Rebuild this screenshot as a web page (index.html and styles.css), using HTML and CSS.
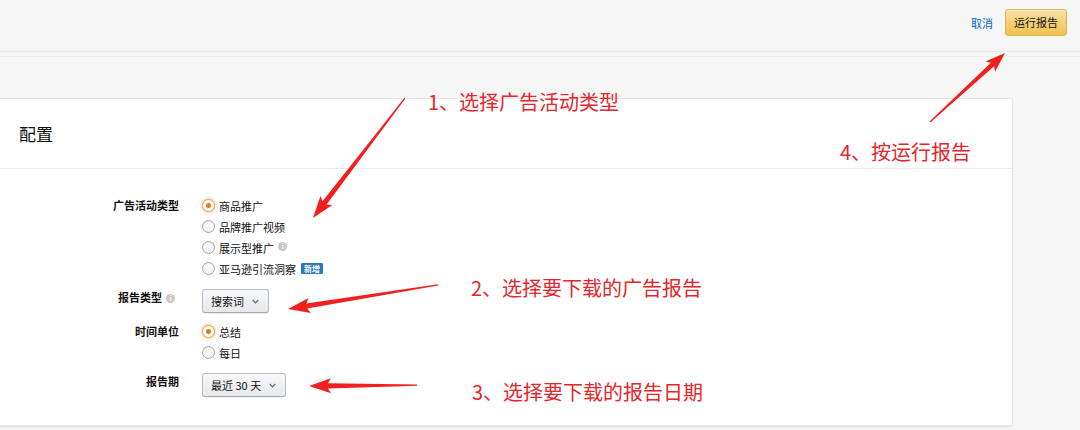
FILE: index.html
```html
<!DOCTYPE html>
<html lang="zh-CN">
<head>
    <meta charset="UTF-8">
    <meta name="viewport" content="width=device-width, initial-scale=1.0">
    <title>配置报告</title>
    <link rel="stylesheet" href="styles.css">
</head>
<body>
    <div class="page">
        <header class="topbar">
            <a class="cancel-link" href="#">取消</a>
            <button class="run-btn">运行报告</button>
        </header>
        <div class="subbar"></div>

        <main class="main">
            <section class="card">
                <div class="card-header">配置</div>
                <div class="card-body">
                    <div class="form-row">
                        <div class="form-label">广告活动类型</div>
                        <div class="form-field">
                            <label class="radio"><span class="radio-dot checked"></span>商品推广</label>
                            <label class="radio"><span class="radio-dot"></span>品牌推广视频</label>
                            <label class="radio"><span class="radio-dot"></span>展示型推广<span class="info-icon">i</span></label>
                            <label class="radio"><span class="radio-dot"></span>亚马逊引流洞察<span class="badge">新增</span></label>
                        </div>
                    </div>

                    <div class="form-row select-row">
                        <div class="form-label">报告类型<span class="info-icon">i</span></div>
                        <div class="form-field">
                            <div class="dropdown">搜索词
                                <svg class="chevron" width="7" height="5" viewBox="0 0 7 5"><polyline points="0.8,1 3.5,3.8 6.2,1" fill="none" stroke="#666" stroke-width="1.2"/></svg>
                            </div>
                        </div>
                    </div>

                    <div class="form-row time-row">
                        <div class="form-label">时间单位</div>
                        <div class="form-field">
                            <label class="radio"><span class="radio-dot checked"></span>总结</label>
                            <label class="radio"><span class="radio-dot"></span>每日</label>
                        </div>
                    </div>

                    <div class="form-row select-row">
                        <div class="form-label">报告期</div>
                        <div class="form-field">
                            <div class="dropdown">最近 30 天
                                <svg class="chevron" width="7" height="5" viewBox="0 0 7 5"><polyline points="0.8,1 3.5,3.8 6.2,1" fill="none" stroke="#666" stroke-width="1.2"/></svg>
                            </div>
                        </div>
                    </div>
                </div>
            </section>
        </main>

        <!-- annotations drawn on top of the screenshot -->
        <div class="notes">
            <svg class="arrows" width="1080" height="430" viewBox="0 0 1080 430">
                <g fill="#f0201e">
                    <polygon transform="translate(313,218) rotate(127.5)" points="-151,-0.6 -19,-2.6 -22,-7.5 0,0 -22,7.5 -19,2.6 -151,0.6"/>
                    <polygon transform="translate(288,309) rotate(170.9)" points="-152,-0.6 -19,-2.6 -22,-7.5 0,0 -22,7.5 -19,2.6 -152,0.6"/>
                    <polygon transform="translate(309,386) rotate(179.5)" points="-108,-0.6 -19,-2.6 -22,-7.5 0,0 -22,7.5 -19,2.6 -108,0.6"/>
                    <polygon transform="translate(1005,53) rotate(-42.6)" points="-102,-0.6 -17,-2.4 -20,-7 0,0 -20,7 -17,2.4 -102,0.6"/>
                </g>
            </svg>
            <div class="note note-1">1、选择广告活动类型</div>
            <div class="note note-2">2、选择要下载的广告报告</div>
            <div class="note note-3">3、选择要下载的报告日期</div>
            <div class="note note-4">4、按运行报告</div>
        </div>
    </div>
</body>
</html>
```

FILE: styles.css
```css
body {
    margin: 0;
    background-color: #f6f6f6;
    color: #111;
    font-family: "Noto Sans CJK SC", "Liberation Sans", sans-serif;
    font-size: 11px;
}
.page {
    position: relative;
    width: 1080px;
    height: 430px;
    overflow: hidden;
}
.topbar {
    height: 52px;
    display: flex;
    justify-content: flex-end;
    align-items: center;
    gap: 12px;
    padding-right: 13px;
    border-bottom: 1px solid #e9e9e9;
    box-sizing: border-box;
}
.cancel-link {
    color: #0066c0;
    text-decoration: none;
    font-size: 11px;
    margin-top: -5px;
}
.run-btn {
    width: 62px;
    height: 27px;
    padding: 0;
    margin-top: -7px;
    font-family: inherit;
    font-size: 11px;
    color: #111;
    background: linear-gradient(to bottom, #f7dfa5, #f0c14b);
    border: 1px solid #d9b458;
    border-radius: 3px;
    box-shadow: 0 1px 0 rgba(255, 255, 255, 0.4) inset;
}
.subbar {
    height: 4px;
    border-bottom: 1px solid #ececec;
}
.main {
    padding-top: 41px;
}
.card {
    margin-left: -10px;
    width: 1023px;
    height: 328px;
    background-color: #fff;
    border: 1px solid #e6e6e6;
    border-radius: 3px;
    box-shadow: 0 1px 2px rgba(0, 0, 0, 0.08);
    box-sizing: border-box;
}
.card-header {
    height: 70px;
    padding-left: 28px;
    display: flex;
    align-items: center;
    font-size: 17px;
    color: #111;
    border-bottom: 1px solid #eaeaea;
    box-sizing: border-box;
}
.card-body {
    padding-top: 26px;
}
.form-row {
    display: grid;
    grid-template-columns: 188px 1fr;
    column-gap: 23px;
    margin-bottom: 10px;
}
.time-row {
    margin-top: -2px;
}
.form-label {
    text-align: right;
    font-weight: bold;
    line-height: 21px;
    color: #111;
}
.select-row .form-label {
    margin-top: -2px;
}
.form-field {
    display: flex;
    flex-direction: column;
    align-items: flex-start;
}
.radio {
    display: flex;
    align-items: center;
    height: 21px;
    color: #111;
}
.radio-dot {
    width: 13px;
    height: 13px;
    margin-right: 4px;
    border: 1px solid #a6a6a6;
    border-radius: 50%;
    background: linear-gradient(to bottom, #fdfdfd, #f1f1f1);
    box-shadow: 0 1px 0 rgba(0, 0, 0, 0.05) inset;
    box-sizing: border-box;
    position: relative;
}
.radio-dot.checked {
    border-color: #e0a060;
    background: #fff;
    box-shadow: 0 0 3px 1px rgba(228, 121, 17, 0.35);
}
.radio-dot.checked::after {
    content: "";
    position: absolute;
    left: 3px;
    top: 3px;
    width: 5px;
    height: 5px;
    border-radius: 50%;
    background-color: #e47911;
}
.info-icon {
    display: inline-flex;
    align-items: center;
    justify-content: center;
    width: 9px;
    height: 9px;
    margin-left: 4px;
    margin-right: 4px;
    border-radius: 50%;
    background-color: #c8c8c8;
    color: #fff;
    font-size: 7px;
    font-weight: bold;
    line-height: 1;
    vertical-align: middle;
    position: relative;
    top: -1px;
}
.badge {
    margin-left: 5px;
    padding: 0 3px;
    height: 11px;
    line-height: 11px;
    font-size: 8px;
    font-weight: bold;
    color: #fff;
    background-color: #2b78b9;
    border-radius: 1px;
}
.dropdown {
    display: flex;
    align-items: center;
    gap: 8px;
    height: 24px;
    padding: 0 9px 0 8px;
    color: #111;
    background: linear-gradient(to bottom, #f7f8fa, #e7e9ec);
    border: 1px solid #b9bcc1;
    border-bottom-color: #a2a6ac;
    border-radius: 3px;
    box-shadow: 0 1px 1px rgba(0, 0, 0, 0.08);
    box-sizing: border-box;
}
.chevron {
    display: block;
}
.notes {
    position: absolute;
    left: 0;
    top: 0;
    width: 1080px;
    height: 430px;
    pointer-events: none;
}
.arrows {
    position: absolute;
    left: 0;
    top: 0;
}
.note {
    position: absolute;
    font-size: 20px;
    line-height: 20px;
    color: #e5262b;
    white-space: nowrap;
}
.note-1 { left: 428px; top: 92px; }
.note-2 { left: 471px; top: 278px; }
.note-3 { left: 472px; top: 382px; }
.note-4 { left: 840px; top: 142px; }
```
